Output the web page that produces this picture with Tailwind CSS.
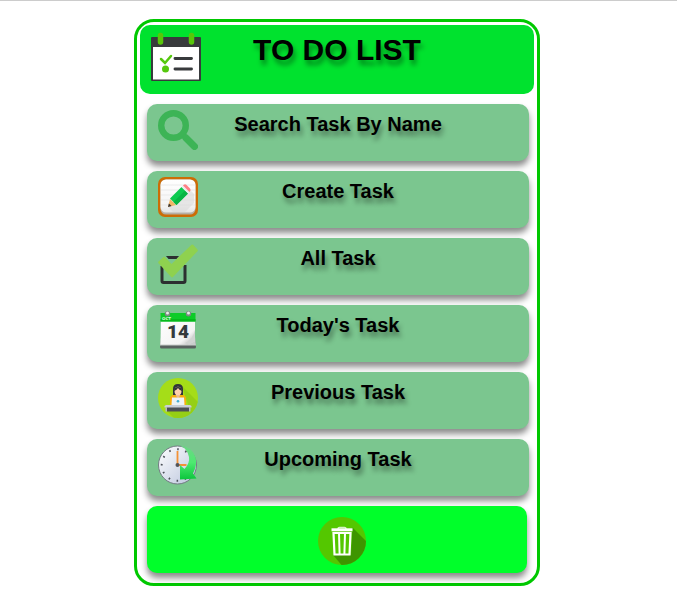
<!DOCTYPE html>
<html lang="en">
<head>
<meta charset="utf-8">
<meta name="viewport" content="width=device-width, initial-scale=1">
<title>To Do List</title>
<script src="https://cdn.jsdelivr.net/npm/@tailwindcss/browser@4"></script>
</head>
<body class="border-t border-[#cccccc] bg-white pr-[3px] font-['Liberation_Sans',Arial,sans-serif] text-black">
<main class="mx-auto mt-[18px] w-full max-w-[406px] rounded-[20px] border-[3px] border-[#00c800] p-[3px]">
  <header class="grid grid-cols-[50px_1fr_50px] items-start rounded-[10px] bg-[#00e22e] px-[11px] pt-[7px] pb-3">
    <svg class="size-[50px]" viewBox="0 0 50 50" aria-hidden="true">
      <path d="M1 5h48q1 0 1 1v42q0 1-1 1H1q-1 0-1-1V6q0-1 1-1z" fill="#383a3c"/>
      <path d="M2 15h46v32.500H2z" fill="#fff"/>
      <path d="M9.500 3.500v6.500M40.500 3.500v6.500" stroke="#58c70a" stroke-width="5.500" stroke-linecap="round"/>
      <path d="M10 27l4 4 6-7" fill="none" stroke="#55c80d" stroke-width="2.500" stroke-linecap="round"/>
      <circle cx="14.500" cy="37" r="3.500" fill="#55c80d"/>
      <path d="M24 26.500h16.500M24 37h16.500" stroke="#383a3c" stroke-width="2.900" stroke-linecap="round"/>
    </svg>
    <h1 class="text-center text-[30px] leading-[36px] font-bold text-shadow-[2px_5px_5px_rgb(0_0_0/0.4)]">TO DO LIST</h1>
  </header>

  <nav class="mt-[10px] flex flex-col gap-[10px] pr-[5px] pb-[7px] pl-[7px]" aria-label="Tasks">
    <button type="button" class="grid grid-cols-[40px_1fr_40px] items-start rounded-[10px] bg-[#7bc68f] px-[11px] pt-[6px] pb-[11px] shadow-[0_5px_6px_rgb(0_0_0/0.45)]">
      <svg class="size-[40px]" viewBox="0 0 40 40" aria-hidden="true">
        <circle cx="15.500" cy="15.500" r="12.300" fill="none" stroke="#3db456" stroke-width="6.400"/>
        <path d="M25 25l3 3" stroke="#3db456" stroke-width="5.500"/>
        <path d="M28 28l8.500 8.500" stroke="#3db456" stroke-width="7" stroke-linecap="round"/>
      </svg>
      <span class="text-center text-[20px] leading-[28px] font-bold text-shadow-[2px_5px_5px_rgb(0_0_0/0.4)]">Search Task By Name</span>
    </button>

    <button type="button" class="grid grid-cols-[40px_1fr_40px] items-start rounded-[10px] bg-[#7bc68f] px-[11px] pt-[6px] pb-[11px] shadow-[0_5px_6px_rgb(0_0_0/0.45)]">
      <svg class="size-[40px]" viewBox="0 0 40 40" aria-hidden="true">
        <defs><linearGradient id="paper" x2="0" y2="1"><stop offset="0" stop-color="#fff"/><stop offset=".8" stop-color="#f4f4f4"/><stop offset="1" stop-color="#e4e4e4"/></linearGradient></defs>
        <rect width="40" height="40" rx="7" fill="#cc6c06"/>
        <rect x="2.500" y="2.500" width="35" height="35" rx="5.500" fill="#b5aea4"/>
        <rect x="2.500" y="2.500" width="35" height="33" rx="5.500" fill="url(#paper)"/>
        <path d="M3 8h34M3 13h34M3 18h34M3 23h34M3 28h34" stroke="#e6e6e6" stroke-width=".8"/>
        <path d="M10 30l5 5h12l9-9v-9l-5-5z" fill="#d8d8d8" opacity=".55"/>
        <path d="M10 30l2-8 6 6z" fill="#f2b768"/>
        <path d="M10 30l.9-3.600 2.700 2.700z" fill="#333"/>
        <path d="M12 21.500L23.500 10l6.500 6.500L18.500 28z" fill="#0dca50"/>
        <path d="M15.500 25L27 13.500l3 3L18.500 28z" fill="#08b544"/>
        <path d="M23.500 10L25 8.500l6.500 6.500-1.500 1.500z" fill="#e8eeee"/>
        <path d="M25 8.500l.8-.8q1.300-1 2.500 0l3.700 3.700q1.300 1.500 0 2.800l-.6.800z" fill="#ff8085"/>
      </svg>
      <span class="text-center text-[20px] leading-[28px] font-bold text-shadow-[2px_5px_5px_rgb(0_0_0/0.4)]">Create Task</span>
    </button>

    <button type="button" class="grid grid-cols-[40px_1fr_40px] items-start rounded-[10px] bg-[#7bc68f] px-[11px] pt-[6px] pb-[11px] shadow-[0_5px_6px_rgb(0_0_0/0.45)]">
      <svg class="size-[40px]" viewBox="0 0 40 40" aria-hidden="true">
        <path d="M8 12h13l-2.500 3h-8z" fill="#2c2f30"/>
        <path d="M4 22v15q0 1.500 1.500 1.500h20q1.500 0 1.500-1.500V21" fill="none" stroke="#2c2f30" stroke-width="3"/>
        <path d="M.5 17.500L5.500 13q.7-.5 1.400 0L13.500 20 33.500.8q.8-.8 1.600 0l4.400 4.700q.7.900 0 1.700L15 33q-.9.900-1.800 0L.5 19.200q-.8-.9 0-1.700z" fill="#8fd14f"/>
      </svg>
      <span class="text-center text-[20px] leading-[28px] font-bold text-shadow-[2px_5px_5px_rgb(0_0_0/0.4)]">All Task</span>
    </button>

    <button type="button" class="grid grid-cols-[40px_1fr_40px] items-start rounded-[10px] bg-[#7bc68f] px-[11px] pt-[6px] pb-[11px] shadow-[0_5px_6px_rgb(0_0_0/0.45)]">
      <svg class="size-[40px]" viewBox="0 0 40 40" aria-hidden="true">
        <defs><linearGradient id="sheet" x2="1" y2="1"><stop offset="0" stop-color="#fff"/><stop offset=".75" stop-color="#f4f4f4"/><stop offset=".9" stop-color="#c9c9c9"/><stop offset="1" stop-color="#fff"/></linearGradient></defs>
        <path d="M3 28L2 36q0 1.500 1.500 1.500h33q1.500 0 1.500-1.500l-1-8z" fill="#59605f"/>
        <path d="M3 26L2 34.500h36L37 26z" fill="#c9cdcc"/>
        <path d="M3 2h34v28l-6 3.500H2.500z" fill="url(#sheet)"/>
        <path d="M37 19q-2 9-10 13l4 1.500 6-3.500z" fill="#d0d3d2"/>
        <path d="M2.500 2h35v8.500h-35z" fill="#0ccc27"/>
        <path d="M2.500 8h35v2.500h-35z" fill="#06b91c"/>
        <circle cx="9.500" cy="2.700" r="2.700" fill="#7f8884"/><circle cx="30.500" cy="2.700" r="2.700" fill="#7f8884"/>
        <circle cx="9.500" cy="2" r="1.500" fill="#e8ecea"/><circle cx="30.500" cy="2" r="1.500" fill="#e8ecea"/>
        <text x="4" y="8.600" font-family="DejaVu Sans" font-size="4" font-weight="bold" fill="#d9ffdc">OCT</text>
        <text x="20" y="27" text-anchor="middle" font-family="Roboto" font-size="19" font-weight="900" fill="#353a3c">14</text>
      </svg>
      <span class="text-center text-[20px] leading-[28px] font-bold text-shadow-[2px_5px_5px_rgb(0_0_0/0.4)]">Today's Task</span>
    </button>

    <button type="button" class="grid grid-cols-[40px_1fr_40px] items-start rounded-[10px] bg-[#7bc68f] px-[11px] pt-[6px] pb-[11px] shadow-[0_5px_6px_rgb(0_0_0/0.45)]">
      <svg class="size-[40px]" viewBox="0 0 40 40" aria-hidden="true">
        <defs><clipPath id="disc"><circle cx="20" cy="20" r="20"/></clipPath></defs>
        <circle cx="20" cy="20" r="20" fill="#a5dd18"/>
        <path d="M24 8l20 20v16H20L9 33h23z" fill="#95cf15" clip-path="url(#disc)"/>
        <path d="M15 17v-6q0-5 5-5t5 5v6z" fill="#30343a"/>
        <path d="M12 27v-6q0-4 4-4h8q4 0 4 4v6z" fill="#f9ad0d"/>
        <path d="M18 14h4v4l-2 2-2-2z" fill="#f0b88f"/>
        <ellipse cx="20" cy="13" rx="3.500" ry="4.200" fill="#ffd0ac"/>
        <path d="M16 13q0-4 4-4 4 0 4 4-3-1-4-3-1 2-4 3z" fill="#30343a"/>
        <path d="M14 19.500h12l.5 7.500h-13z" fill="#eef2f5"/>
        <circle cx="20" cy="23.200" r="1.300" fill="#43add4"/>
        <path d="M9 29h22v4.500H9z" fill="#4c4f55"/>
        <path d="M8 27h24l1.500 1v1.500h-27V28z" fill="#c9ced6"/>
        <path d="M7.500 29.500h1.500v4h-1.500zM31 29.500h1.500v4H31z" fill="#b5bac2"/>
      </svg>
      <span class="text-center text-[20px] leading-[28px] font-bold text-shadow-[2px_5px_5px_rgb(0_0_0/0.4)]">Previous Task</span>
    </button>

    <button type="button" class="grid grid-cols-[40px_1fr_40px] items-start rounded-[10px] bg-[#7bc68f] px-[11px] pt-[6px] pb-[11px] shadow-[0_5px_6px_rgb(0_0_0/0.45)]">
      <svg class="size-[40px]" viewBox="0 0 40 40" aria-hidden="true">
        <defs>
          <linearGradient id="face" x2="1" y2="1"><stop offset="0" stop-color="#fff"/><stop offset="1" stop-color="#b9c4dc"/></linearGradient>
          <linearGradient id="arrow" x2="0" y2="1"><stop offset="0" stop-color="#6fd488"/><stop offset=".5" stop-color="#4dea70"/><stop offset="1" stop-color="#0bc63c"/></linearGradient>
        </defs>
        <circle cx="19.500" cy="20" r="19" fill="url(#face)" stroke="#737b83"/>
        <circle cx="19.500" cy="20" r="15.800" fill="none" stroke="#4b5058" stroke-width="1.900" stroke-dasharray="1.600 6.673" stroke-dashoffset=".8"/>
        <path d="M19.500 20V6M19.500 20h9" stroke="#f39237" stroke-width="1.800"/>
        <circle cx="19.500" cy="20" r="2" fill="#51555c"/>
        <path d="M22 .5Q34 1.500 37.500 12q2 8.500-2.500 16.500l3.500 5L22 34.500V20l4.500 4Q32 18 31 12 29.500 4 22 .5z" fill="url(#arrow)"/>
      </svg>
      <span class="text-center text-[20px] leading-[28px] font-bold text-shadow-[2px_5px_5px_rgb(0_0_0/0.4)]">Upcoming Task</span>
    </button>

    <button type="button" aria-label="Delete tasks" class="mr-[2px] flex justify-center rounded-[10px] bg-[#00ff2a] pt-[11px] pb-2 pl-[10px] shadow-[0_5px_6px_rgb(0_0_0/0.45)]">
      <svg class="size-[48px]" viewBox="0 0 48 48" aria-hidden="true">
        <defs><clipPath id="bin"><circle cx="24" cy="24" r="24"/></clipPath></defs>
        <circle cx="24" cy="24" r="24" fill="#54c700"/>
        <path d="M34.500 10.500L52 28v24H27L15 38h18z" fill="#3e9500" clip-path="url(#bin)"/>
        <path d="M20 12q0-1.500 1.500-1.500h5Q28 10.500 28 12" fill="none" stroke="#d9f1c8" stroke-width="1.500"/>
        <path d="M13.500 12.800h21" stroke="#fff" stroke-width="3"/>
        <path d="M15.500 16l1 21.500h15l1-21.500z" fill="none" stroke="#fff" stroke-width="2.200"/>
        <path d="M21 16l.6 21M27 16l-.6 21" stroke="#fff" stroke-width="2"/>
      </svg>
    </button>
  </nav>
</main>
</body>
</html>
